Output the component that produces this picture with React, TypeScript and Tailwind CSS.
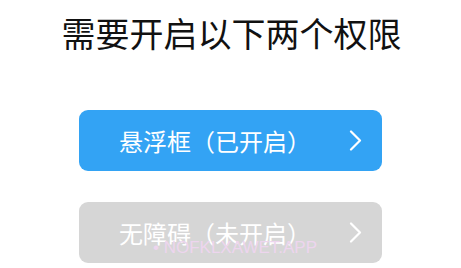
import React from 'react';

const cjk = { fontFamily: '"Noto Sans CJK SC", "Noto Sans", sans-serif' };

function Chevron() {
  return (
    <svg width="13" height="21" viewBox="0 0 13 21" fill="none" className="shrink-0">
      <path d="M2 1.5 L11 10.5 L2 19.5" stroke="white" strokeWidth="2.2" strokeLinecap="round" strokeLinejoin="round" />
    </svg>
  );
}

function PermissionButton({ label, enabled }: { label: string; enabled: boolean }) {
  return (
    <div
      className={`w-[303px] h-[61px] rounded-[9px] flex items-center justify-between pl-[40px] pr-[20px] ${
        enabled ? 'bg-[#33a3f4]' : 'bg-[#d6d6d6]'
      }`}
    >
      <span className="text-white text-[24px] leading-none" style={cjk}>{label}</span>
      <Chevron />
    </div>
  );
}

export default function App() {
  return (
    <div className="w-[461px] h-[268px] bg-white flex flex-col items-center relative overflow-hidden">
      {/* Title */}
      <h1 className="mt-[16px] text-[34px] leading-none text-[#111] pl-[2px]" style={cjk}>
        需要开启以下两个权限
      </h1>

      {/* Permission list */}
      <div className="mt-[60px] flex flex-col gap-[31px]">
        <PermissionButton label="悬浮框（已开启）" enabled />
        <PermissionButton label="无障碍（未开启）" enabled={false} />
      </div>

      {/* Watermark */}
      <span
        className="absolute z-10 left-[153px] top-[239px] text-[17px] leading-none text-[#edd5ee] pointer-events-none whitespace-nowrap"
        style={{ fontFamily: '"Liberation Sans", Arial, sans-serif' }}
      >
        • NOFKLXAWET.APP
      </span>
    </div>
  );
}
